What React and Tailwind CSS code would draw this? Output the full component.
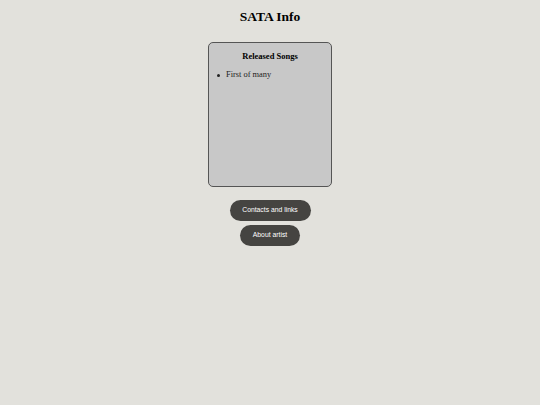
export default function App() {
  const songs = ['First of many'];

  return (
    <div className="min-h-[405px] bg-[#e2e1dc] flex flex-col items-center font-['Liberation_Serif',serif] text-black">
      <h1 className="mt-[8px] text-[13.5px] leading-[17px] font-bold">SATA Info</h1>

      <div className="mt-[17px] w-[124px] h-[145px] bg-[#c8c8c8] border border-[#555] rounded-[5px] px-[8px] pt-[8px]">
        <h2 className="text-center text-[8.5px] leading-[10px] font-bold">Released Songs</h2>
        <ul className="mt-[9px] text-[8.4px] leading-[10px] text-[#222]">
          {songs.map((s) => (
            <li key={s} className="flex items-center gap-[6px]">
              <span className="w-[3px] h-[3px] rounded-full bg-[#222]" />
              {s}
            </li>
          ))}
        </ul>
      </div>

      <div className="mt-[13px] flex flex-col items-center gap-[4px] font-['Liberation_Sans',sans-serif]">
        <button className="h-[21px] w-[81px] rounded-full bg-[#454441] text-white text-[6.8px]">
          Contacts and links
        </button>
        <button className="h-[21px] w-[60px] rounded-full bg-[#454441] text-white text-[6.8px]">
          About artist
        </button>
      </div>
    </div>
  );
}
